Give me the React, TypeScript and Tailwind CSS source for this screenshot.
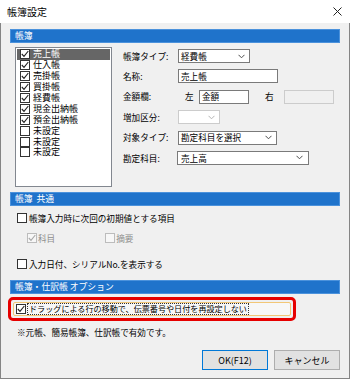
import React from "react";

function Chevron({ color = "#4d4d4d" }: { color?: string }) {
  return (
    <svg width="7" height="5" viewBox="0 0 7 5" className="shrink-0">
      <polyline points="0.5,0.8 3.5,3.8 6.5,0.8" fill="none" stroke={color} strokeWidth="1" />
    </svg>
  );
}

function Box({ checked, disabled }: { checked?: boolean; disabled?: boolean }) {
  return (
    <span
      className={
        "w-[10px] h-[10px] shrink-0 flex items-center justify-center border " +
        (disabled ? "border-[#bcbcbc] bg-[#f7f7f7]" : "border-[#333333] bg-white")
      }
    >
      {checked && (
        <svg width="8" height="8" viewBox="0 0 8 8">
          <polyline
            points="0.8,4 3,6.3 7.3,1"
            fill="none"
            stroke={disabled ? "#a8a8a8" : "#222222"}
            strokeWidth="1.1"
          />
        </svg>
      )}
    </span>
  );
}

function Header({ children }: { children: React.ReactNode }) {
  return (
    <div className="h-[14px] bg-[#1f73cb] border border-[#4b92dc] flex items-center pl-[4px] text-white text-[8.8px] leading-none">
      {children}
    </div>
  );
}

const listItems: { t: string; c: boolean }[] = [
  { t: "売上帳", c: true },
  { t: "仕入帳", c: true },
  { t: "売掛帳", c: true },
  { t: "買掛帳", c: true },
  { t: "経費帳", c: true },
  { t: "現金出納帳", c: true },
  { t: "預金出納帳", c: true },
  { t: "未設定", c: false },
  { t: "未設定", c: false },
  { t: "未設定", c: false },
];

export default function App() {
  return (
    <div className="w-[350px] h-[379px] flex flex-col bg-[#f0f0f0] text-black text-[8.6px] leading-none font-['Noto_Sans_CJK_JP','Noto_Sans',sans-serif] overflow-hidden">
      {/* title bar */}
      <div className="h-[23px] bg-white flex items-center justify-between pl-[7px] pr-[8px] shrink-0">
        <span className="text-[10px]">帳簿設定</span>
        <svg width="9" height="9" viewBox="0 0 9 9">
          <line x1="0.5" y1="0.5" x2="8.5" y2="8.5" stroke="#222" strokeWidth="1" />
          <line x1="8.5" y1="0.5" x2="0.5" y2="8.5" stroke="#222" strokeWidth="1" />
        </svg>
      </div>

      <div className="flex-1 flex flex-col px-[9px] border-x border-b border-[#858585]">
        {/* section 1 */}
        <div className="mt-[6px]">
          <Header>帳簿</Header>
        </div>
        <div className="flex mt-[4px]">
          <div className="ml-[5px] w-[97px] h-[140px] bg-white border border-[#82878f] pt-[1px] px-[1px] flex flex-col">
            {listItems.map((it, i) => (
              <div
                key={i}
                className={
                  "h-[10.9px] leading-[10px] flex items-center pl-[3px] gap-[3px] text-[9px] " +
                  (i === 0 ? "bg-[#666666] text-white" : "")
                }
              >
                <Box checked={it.c} />
                <span className="leading-[10px]">{it.t}</span>
              </div>
            ))}
          </div>

          <div className="ml-[11px] mt-[2px] flex flex-col gap-[6.4px] flex-1">
            <div className="h-[14px] flex items-center">
              <span className="w-[55px]">帳簿タイプ:</span>
              <div className="w-[72px] h-[14px] bg-white border border-[#7a7a7a] flex items-center justify-between pl-[2px] pr-[4px]">
                <span>経費帳</span>
                <Chevron />
              </div>
            </div>
            <div className="h-[14px] flex items-center">
              <span className="w-[55px]">名称:</span>
              <div className="w-[100px] h-[14px] bg-white border border-[#7a7a7a] flex items-center pl-[2px]">
                <span>売上帳</span>
              </div>
            </div>
            <div className="h-[14px] flex items-center">
              <span className="w-[55px]">金額欄:</span>
              <span className="ml-[7px] w-[14px]">左</span>
              <div className="w-[50px] h-[14px] bg-white border border-[#7a7a7a] flex items-center pl-[2px]">
                <span>金額</span>
              </div>
              <span className="ml-[16px] w-[19px]">右</span>
              <div className="w-[50px] h-[14px] bg-[#f0f0f0] border border-[#cccccc]" />
            </div>
            <div className="h-[14px] flex items-center">
              <span className="w-[55px]">増加区分:</span>
              <div className="w-[42px] h-[14px] bg-white border border-[#cccccc] flex items-center justify-end pr-[4px]">
                <Chevron color="#b5b5b5" />
              </div>
            </div>
            <div className="h-[14px] flex items-center">
              <span className="w-[55px]">対象タイプ:</span>
              <div className="w-[99px] h-[14px] bg-white border border-[#7a7a7a] flex items-center justify-between pl-[2px] pr-[4px]">
                <span>勘定科目を選択</span>
                <Chevron />
              </div>
            </div>
            <div className="h-[14px] flex items-center">
              <span className="w-[54px]">勘定科目:</span>
              <div className="w-[132px] h-[14px] bg-white border border-[#7a7a7a] flex items-center justify-between pl-[3px] pr-[5px]">
                <span>売上高</span>
                <Chevron />
              </div>
            </div>
          </div>
        </div>

        {/* section 2 */}
        <div className="mt-[5px]">
          <Header>帳簿&nbsp;&nbsp;共通</Header>
        </div>
        <div className="mt-[6px] h-[12px] flex items-center pl-[7px] gap-[2px]">
          <Box />
          <span>帳簿入力時に次回の初期値とする項目</span>
        </div>
        <div className="mt-[8px] h-[12px] flex items-center pl-[17px]">
          <Box checked disabled />
          <span className="ml-[1px] text-[#8c8c8c]">科目</span>
          <span className="ml-[50px]">
            <Box disabled />
          </span>
          <span className="ml-[1px] text-[#8c8c8c]">摘要</span>
        </div>
        <div className="mt-[14px] h-[12px] flex items-center pl-[7px] gap-[2px]">
          <Box />
          <span>入力日付、シリアルNo.を表示する</span>
        </div>

        {/* section 3 */}
        <div className="mt-[10px]">
          <Header>帳簿・仕訳帳&nbsp;オプション</Header>
        </div>
        <div className="mt-[3px] -ml-[2px] w-[288px] h-[24px] border-[3px] border-[#e60000] rounded-[5px] p-[2px] flex">
          <div className="flex-1 border border-[#f2c777] rounded-[2px] bg-[#f7f7f7] flex items-center pl-[2px] gap-[1px]">
            <Box checked />
            <span className="border border-dotted border-[#333] px-[1px] text-[8.1px] leading-[10px]">
              ドラッグによる行の移動で、伝票番号や日付を再設定しない
            </span>
          </div>
        </div>
        <div className="mt-[5px] h-[12px] flex items-center pl-[7px]">
          <span>※元帳、簡易帳簿、仕訳帳で有効です。</span>
        </div>

        {/* buttons */}
        <div className="mt-[12px] flex justify-end gap-[6px]">
          <div className="w-[66px] h-[20px] bg-[#e1e1e1] border border-[#0078d7] flex items-center justify-center text-[9px]">
            OK(F12)
          </div>
          <div className="w-[66px] h-[20px] bg-[#e1e1e1] border border-[#adadad] flex items-center justify-center text-[9px]">
            キャンセル
          </div>
        </div>
      </div>
    </div>
  );
}
